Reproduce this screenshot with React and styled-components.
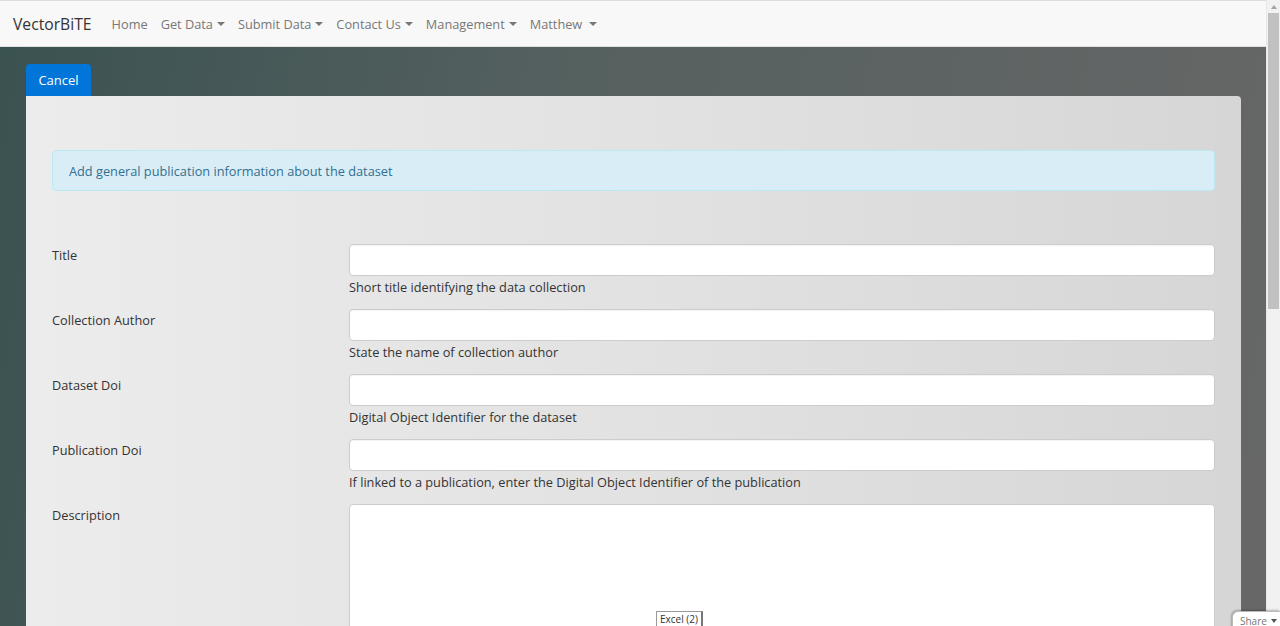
import React from "react";
import styled, { createGlobalStyle } from "styled-components";

const Global = createGlobalStyle`
  html, body { margin: 0; padding: 0; height: 626px; overflow: hidden; }
  body { font-family: "Open Sans", "Noto Sans", sans-serif; color: #333; }
  * { box-sizing: border-box; }
`;

const Screen = styled.div`
  position: relative;
  display: flex;
  width: 1280px;
  height: 626px;
  overflow: hidden;
`;

const Page = styled.div`
  flex: 1;
  display: flex;
  flex-direction: column;
  min-width: 0;
  min-height: 0;
`;

const Navbar = styled.nav`
  flex-shrink: 0;
  display: flex;
  align-items: center;
  height: 47px;
  background: #f8f8f8;
  border-top: 1px solid #dcdcdc;
  border-bottom: 1px solid #e0e0e0;
  padding-left: 13px;
`;

const Brand = styled.div`
  font-size: 15.7px;
  color: #333;
  margin-right: 20px;
`;

const NavItem = styled.div`
  display: flex;
  align-items: center;
  font-size: 12.75px;
  color: #777;
  margin-right: 13px;
`;

const Caret = styled.span`
  display: inline-block;
  width: 0;
  height: 0;
  border-left: 4px solid transparent;
  border-right: 4px solid transparent;
  border-top: 4px solid #777;
  margin-left: ${(p) => p.$gap || 4}px;
  margin-top: 1px;
`;

const Backdrop = styled.main`
  flex: 1;
  min-height: 0;
  overflow: hidden;
  background: linear-gradient(100deg, #3a5251 0%, #54605f 40%, #676767 100%);
  padding: 17px 25px 0 26px;
  display: flex;
  flex-direction: column;
`;

const TabButton = styled.button`
  flex-shrink: 0;
  align-self: flex-start;
  width: 65px;
  height: 32px;
  border: none;
  border-radius: 4px 4px 0 0;
  background: #0275d8;
  color: #fff;
  font-family: inherit;
  font-size: 13px;
  padding: 0;
`;

const Panel = styled.section`
  flex: 1;
  background: linear-gradient(90deg, #ececec 0%, #e2e2e2 50%, #d6d6d6 100%);
  border-radius: 0 4px 0 0;
  padding: 54px 26px 0 26px;
`;

const Alert = styled.div`
  height: 41px;
  background: #d9edf7;
  border: 1px solid #bce8f1;
  border-radius: 4px;
  color: #31708f;
  font-size: 12.75px;
  display: flex;
  align-items: center;
  padding-left: 16px;
  margin-bottom: 53px;
`;

const Form = styled.form`
  display: flex;
  flex-direction: column;
  gap: 12px;
`;

const Row = styled.div`
  display: grid;
  grid-template-columns: 297px 1fr;
`;

const Label = styled.label`
  font-size: 12.75px;
  color: #333;
  padding-top: 2px;
`;

const Field = styled.div`
  display: flex;
  flex-direction: column;
`;

const Input = styled.input`
  height: 32px;
  border: 1px solid #ccc;
  border-radius: 4px;
  background: #fff;
  box-shadow: inset 0 1px 1px rgba(0, 0, 0, 0.05);
  font-family: inherit;
`;

const TextArea = styled.textarea`
  height: 140px;
  border: 1px solid #ccc;
  border-radius: 4px;
  background: #fff;
  resize: none;
  font-family: inherit;
`;

const Help = styled.div`
  font-size: 12.75px;
  color: #333;
  margin-top: 1px;
  line-height: 20px;
`;

const Scrollbar = styled.div`
  width: 14px;
  background: #f1f1f1;
  border-left: 1px solid #e8e8e8;
  display: flex;
  flex-direction: column;
  align-items: center;
`;

const ScrollArrow = styled.div`
  width: 0;
  height: 0;
  margin: 5px 0 4px;
  border-left: 3px solid transparent;
  border-right: 3px solid transparent;
  border-bottom: 4px solid #a3a3a3;
`;

const Thumb = styled.div`
  width: 11px;
  height: 296px;
  background: #c1c1c1;
`;

const ExcelTip = styled.div`
  position: absolute;
  left: 656px;
  top: 611px;
  height: 17px;
  padding: 0 3px;
  background: #fff;
  border: 1px solid #999;
  border-right: 2px solid #777;
  font-size: 10px;
  color: #333;
  line-height: 15px;
`;

const Share = styled.div`
  position: absolute;
  left: 1232px;
  top: 611px;
  width: 48px;
  height: 18px;
  background: #fff;
  border: 1px solid #bbb;
  border-right: none;
  border-bottom: none;
  border-radius: 6px 0 0 0;
  box-shadow: -1px -1px 2px rgba(0, 0, 0, 0.25);
  font-size: 10px;
  color: #777;
  display: flex;
  align-items: center;
  padding-left: 7px;
  gap: 4px;
`;

const ShareCaret = styled.span`
  width: 0;
  height: 0;
  border-left: 3px solid transparent;
  border-right: 3px solid transparent;
  border-top: 4px solid #555;
`;

const fields = [
  { label: "Title", help: "Short title identifying the data collection" },
  { label: "Collection Author", help: "State the name of collection author" },
  { label: "Dataset Doi", help: "Digital Object Identifier for the dataset" },
  {
    label: "Publication Doi",
    help: "If linked to a publication, enter the Digital Object Identifier of the publication",
  },
];

const navItems = [
  { t: "Home" },
  { t: "Get Data", c: true },
  { t: "Submit Data", c: true },
  { t: "Contact Us", c: true },
  { t: "Management", c: true },
  { t: "Matthew", c: true, gap: 7 },
];

export default function App() {
  return (
    <>
      <Global />
      <Screen>
        <Page>
          <Navbar>
            <Brand>VectorBiTE</Brand>
            {navItems.map((n) => (
              <NavItem key={n.t}>
                {n.t}
                {n.c && <Caret $gap={n.gap} />}
              </NavItem>
            ))}
          </Navbar>
          <Backdrop>
            <TabButton type="button">Cancel</TabButton>
            <Panel>
              <Alert>Add general publication information about the dataset</Alert>
              <Form>
                {fields.map((f) => (
                  <Row key={f.label}>
                    <Label>{f.label}</Label>
                    <Field>
                      <Input type="text" />
                      <Help>{f.help}</Help>
                    </Field>
                  </Row>
                ))}
                <Row>
                  <Label>Description</Label>
                  <Field>
                    <TextArea />
                  </Field>
                </Row>
              </Form>
            </Panel>
          </Backdrop>
        </Page>
        <Scrollbar>
          <ScrollArrow />
          <Thumb />
        </Scrollbar>
        <ExcelTip>Excel (2)</ExcelTip>
        <Share>
          Share <ShareCaret />
        </Share>
      </Screen>
    </>
  );
}
